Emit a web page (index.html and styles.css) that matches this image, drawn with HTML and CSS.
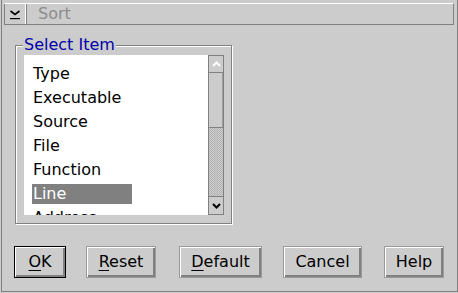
FILE: index.html
```html
<!DOCTYPE html>
<html lang="en">
<head>
  <title>Sort</title>
  <link rel="stylesheet" href="styles.css">
</head>
<body>
  <div class="window">
    <div class="titlebar">
      <div class="sysmenu">
        <svg width="12" height="12" viewBox="0 0 12 12">
          <polyline points="1.5,3 6,6.5 10.5,3" fill="none" stroke="#000" stroke-width="1.6"/>
          <rect x="1" y="10" width="10" height="1.2" fill="#000"/>
        </svg>
      </div>
      <div class="title">Sort</div>
    </div>

    <fieldset class="group">
      <legend>Select Item</legend>
      <div class="listbox">
        <ul class="items">
          <li>Type</li>
          <li>Executable</li>
          <li>Source</li>
          <li>File</li>
          <li>Function</li>
          <li class="selected">Line</li>
          <li>Address</li>
        </ul>
        <div class="scrollbar">
          <div class="sb-up">
            <svg width="9" height="6" viewBox="0 0 9 6">
              <polyline points="1,5 4.5,1.5 8,5" fill="none" stroke="#fff" stroke-width="2"/>
            </svg>
          </div>
          <div class="sb-thumb"></div>
          <div class="sb-track"></div>
          <div class="sb-down">
            <svg width="9" height="6" viewBox="0 0 9 6">
              <polyline points="1,1 4.5,4.5 8,1" fill="none" stroke="#000" stroke-width="2"/>
            </svg>
          </div>
        </div>
      </div>
    </fieldset>

    <div class="buttons">
      <div class="btn default btn-ok"><u>O</u>K</div>
      <div class="btn btn-reset"><u>R</u>eset</div>
      <div class="btn btn-default"><u>D</u>efault</div>
      <div class="btn btn-cancel">Cancel</div>
      <div class="btn btn-help">Help</div>
    </div>
  </div>
</body>
</html>
```

FILE: styles.css
```css
body{
  margin: 0;
  background-color: #cccccc;
  font-family: "DejaVu Sans", Verdana, sans-serif;
  font-size: 16px;
  color: #000000;
}

.window{
  width: 455px;
  height: 291px;
  margin-left: 1px;
  border-left: 1px solid #808080;
  border-right: 1px solid #808080;
  border-bottom: 1px solid #808080;
  overflow: hidden;
}

/* title bar */
.titlebar{
  display: flex;
  height: 20px;
  margin: 3px 3px 0 2px;
  border-top: 1px solid #ffffff;
  border-bottom: 1px solid #808080;
  border-right: 1px solid #808080;
}

.sysmenu{
  width: 20px;
  display: flex;
  align-items: center;
  justify-content: center;
  border-left: 1px solid #808080;
  border-right: 1px solid #ffffff;
  box-shadow: 1px 0 0 #808080;
}

.title{
  padding-left: 12px;
  line-height: 20px;
  color: #8c8c8c;
}

/* group box */
.group{
  width: 200px;
  margin: 12px 0 0 13px;
  padding: 2px 7px 8px 8px;
  border: 1px solid #808080;
  box-shadow: 1px 1px 0 #ffffff, inset 1px 1px 0 #ffffff;
}

.group legend{
  padding: 0 1px;
  margin-left: -1px;
  line-height: 16px;
  color: #0000aa;
  background-color: #cccccc;
}

.listbox{
  display: flex;
  height: 160px;
}

.items{
  flex: 1;
  list-style: none;
  margin: 0;
  padding: 9px 0 0 8px;
  background-color: #ffffff;
  overflow: hidden;
}

.items li{
  width: 99px;
  height: 20px;
  line-height: 20px;
  padding-left: 1px;
  margin-bottom: 4px;
  white-space: nowrap;
}

.items li.selected{
  background-color: #808080;
  color: #ffffff;
}

/* scroll bar */
.scrollbar{
  width: 14px;
  display: flex;
  flex-direction: column;
  border: 1px solid #808080;
}

.sb-up,
.sb-down{
  height: 16px;
  display: flex;
  align-items: center;
  justify-content: center;
  background-color: #cccccc;
}

.sb-up{
  border-bottom: 1px solid #808080;
}

.sb-down{
  height: 17px;
  border-top: 1px solid #808080;
}

.sb-thumb{
  height: 54px;
  border-bottom: 1px solid #808080;
  box-shadow: inset -1px 0 0 #a0a0a0;
}

.sb-track{
  flex: 1;
  background: repeating-conic-gradient(#b4b4b4 0 25%, #cccccc 0 50%) 0 0 / 2px 2px;
}

/* push buttons */
.buttons{
  display: flex;
  margin: 22px 0 0 12px;
}

.btn{
  height: 30px;
  line-height: 30px;
  text-align: center;
  border: 1px solid #9a9a9a;
  box-shadow: inset 1px 1px 0 #ffffff, inset -2px -2px 0 #808080;
}

.btn.default{
  border-color: #000000;
}

.btn u{
  text-decoration-thickness: 1px;
  text-underline-offset: 3px;
}

.btn-ok{ width: 50px; }
.btn-reset{ width: 68px; margin-left: 20px; }
.btn-default{ width: 81px; margin-left: 23px; }
.btn-cancel{ width: 77px; margin-left: 21px; }
.btn-help{ width: 58px; margin-left: 22px; }
```
